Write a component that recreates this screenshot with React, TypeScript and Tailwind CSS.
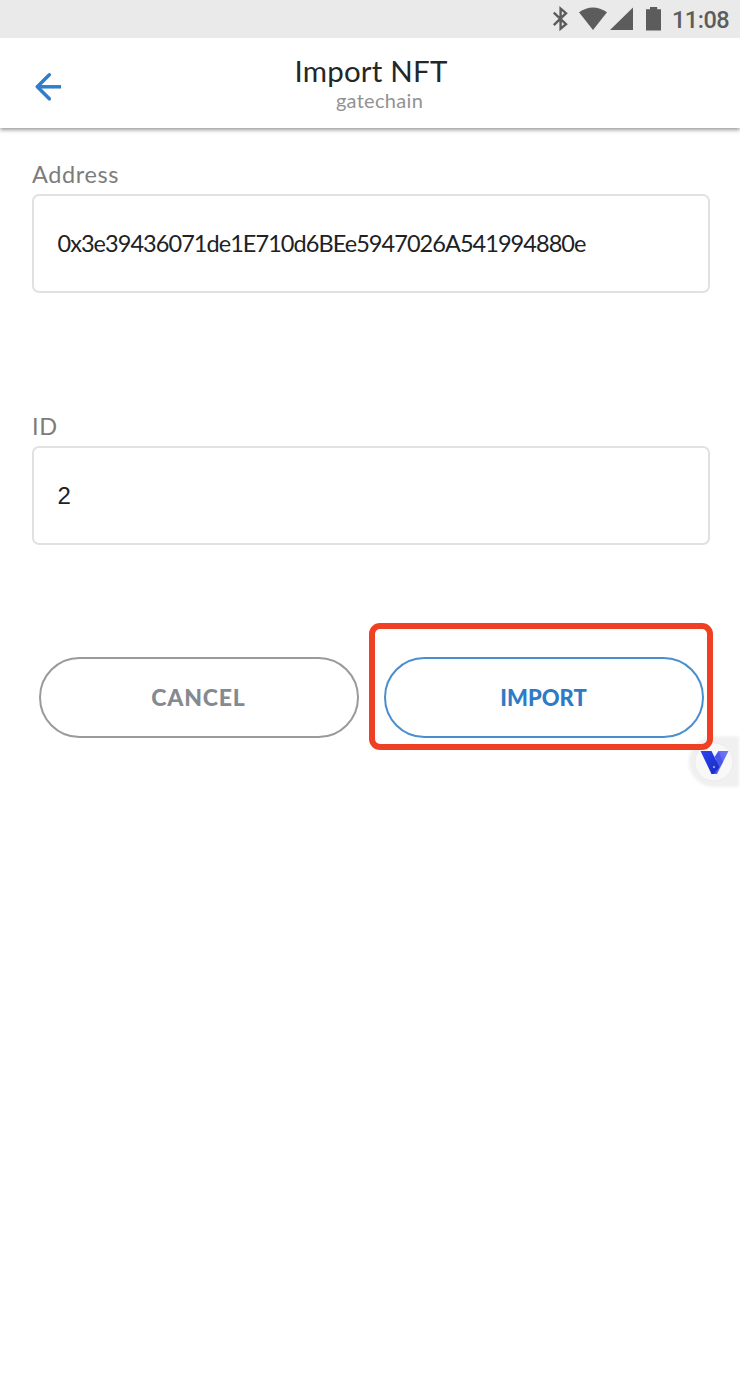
function StatusBar() {
  return (
    <div className="relative z-10 flex h-[38px] shrink-0 items-center bg-[#eaeaea] pl-[552px] text-[#5c5c5c]">
      <svg className="h-[38px] w-[114px] shrink-0" viewBox="552 0 114 38" fill="currentColor">
        <path
          d="M553.8 12.6 L566 24.2 L560.6 28.6 V8.6 L566 13.2 L553.8 25.2"
          fill="none"
          stroke="currentColor"
          strokeWidth="2.4"
        />
        <path d="M579 12.2 Q593 2.8 607 12.2 L593 30 Z" />
        <path d="M633 7.5 V30 H610 Z" />
        <path d="M646 9.2 H650 V7 H657.2 V9.2 H661 V30.5 H646 Z" />
      </svg>
      <span className="ml-[6px] pt-[3px] font-['Roboto',sans-serif] text-[23.5px] leading-none font-medium tracking-[-0.5px]">
        11:08
      </span>
    </div>
  );
}

function Header() {
  return (
    <header className="relative h-[90px] shrink-0 bg-white shadow-[0_2px_4px_rgba(0,0,0,0.4)]">
      <button aria-label="Back" className="absolute top-[34px] left-[34px] text-[#307ec7]">
        <svg className="h-[29px] w-[29px]" viewBox="0 0 29 29" fill="none" stroke="currentColor" strokeWidth="3.5">
          <path d="M27 14.8 H3" />
          <path d="M15.3 2.8 L3.3 14.8 L15.3 26.8" strokeLinecap="round" strokeLinejoin="round" />
        </svg>
      </button>
      <div className="flex flex-col items-center pt-[14px]">
        <h1 className="pl-[2px] text-[29.5px] leading-[38px] tracking-[0.2px] text-[#24272a]">Import NFT</h1>
        <p className="-mt-[2px] pl-[19px] text-[20px] leading-6 tracking-[0.3px] text-[#929292]">gatechain</p>
      </div>
    </header>
  );
}

function Field({ label, value, valueClass }: { label: string; value: string; valueClass: string }) {
  return (
    <div>
      <div className="h-[34px] text-[23.5px] leading-[29px] tracking-[0.6px] text-[#7c7c7c]">{label}</div>
      <div className="flex h-[99px] w-[678px] items-center rounded-[7px] border-2 border-[#e1e1e1] pl-[23.5px] text-[#202124]">
        <span className={valueClass}>{value}</span>
      </div>
    </div>
  );
}

function FloatingBadge() {
  return (
    <svg className="absolute top-[728px] left-[680px] h-[68px] w-[60px]" viewBox="680 728 60 68">
      <defs>
        <filter id="soft" x="-20%" y="-20%" width="140%" height="140%">
          <feGaussianBlur stdDeviation="1.4" />
        </filter>
        <linearGradient id="left" x1="0" y1="0" x2="1" y2="1">
          <stop offset="0" stopColor="#2946f2" />
          <stop offset="1" stopColor="#1b28bf" />
        </linearGradient>
        <linearGradient id="right" x1="1" y1="0" x2="0" y2="1">
          <stop offset="0" stopColor="#7377f3" />
          <stop offset="1" stopColor="#4350ea" />
        </linearGradient>
      </defs>
      <path d="M739 736.5 H714 A25 25 0 0 0 714 787 H739 Z" fill="#f0f0f0" filter="url(#soft)" />
      <circle cx="714" cy="762" r="19" fill="#f8f8f9" stroke="#ebebee" />
      <path d="M718.5 751 H728.5 L717 774 H711.5 Z" fill="url(#right)" />
      <path d="M700.5 751 H711.5 L719.5 767 L713.5 774 H711.5 Z" fill="url(#left)" />
      <path d="M714.5 757 L718.5 751 L723 762 L719.5 767 Z" fill="#4557ed" />
      <circle cx="714" cy="767" r="1.1" fill="#a9b7ff" />
    </svg>
  );
}

export default function App() {
  return (
    <div className="relative flex h-[1388px] w-[740px] flex-col overflow-hidden bg-white font-['Lato',sans-serif]">
      <StatusBar />
      <Header />
      <main className="px-8 pt-[32px]">
        <Field
          label="Address"
          value="0x3e39436071de1E710d6BEe5947026A541994880e"
          valueClass="text-[23.5px] tracking-[-0.95px]"
        />
        <div className="mt-[119px]">
          <Field label="ID" value="2" valueClass="font-['Liberation_Sans',sans-serif] text-[24px]" />
        </div>
        <div className="mt-[111.5px] flex gap-[25px] pl-[6.5px] font-black">
          <button className="h-[81.5px] w-[320px] rounded-full border-2 border-[#9a9a9a] text-[23px] tracking-[0.8px] text-[#858a90]">
            CANCEL
          </button>
          <button className="h-[81.5px] w-[320px] rounded-full border-2 border-[#4a8fcd] text-[22px] text-[#2f7ac5]">
            IMPORT
          </button>
        </div>
      </main>
      <FloatingBadge />
      <div className="pointer-events-none absolute top-[623px] left-[369px] h-[127px] w-[344px] rounded-[11px] border-[6px] border-[#ef4023]" />
    </div>
  );
}
